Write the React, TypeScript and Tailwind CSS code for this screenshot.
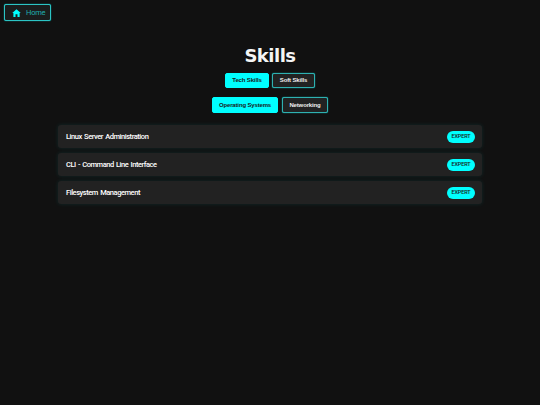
const skills = ["Linux Server Administration", "CLI - Command Line Interface", "Filesystem Management"];

function Tab({ label, active, className }: { label: string; active?: boolean; className: string }) {
  return (
    <button
      className={`h-full rounded-[2px] border text-[6px] font-bold tracking-[-0.15px] font-['Liberation_Sans',sans-serif] ${className} ${
        active
          ? "border-[#00ffff] bg-[#00ffff] text-[#1a1a1a]"
          : "border-[#2fb0b0] bg-[#222222] text-[#eeeeee] shadow-[0_0_1px_#00ffff]"
      }`}
    >
      {label}
    </button>
  );
}

export default function App() {
  return (
    <div className="min-h-[405px] bg-[#111111] pt-[4px] font-['Roboto',sans-serif] antialiased">
      <div className="pl-[4px]">
        <button className="flex h-[17px] w-[47px] items-center gap-[5px] rounded-[2px] border border-[#2cc4c4] bg-[#1a1d1d] pl-[7px] text-[7.5px] leading-[10px] tracking-[-0.2px] text-[#20b0b0] shadow-[0_0_1px_#00ffff]">
          <svg width="9" height="8" viewBox="0 0 10 9" className="block shrink-0">
            <path fill="#00ffff" d="M5 0.3 0.2 4.6h1.3V9h2.4V6h2.2v3h2.4V4.6h1.3z" />
          </svg>
          <span className="block">Home</span>
        </button>
      </div>

      <h1 className="mt-[23px] text-center font-['DejaVu_Sans',sans-serif] text-[18px] font-bold leading-[24px] tracking-[-0.5px] text-[#f5f5f5]">
        Skills
      </h1>

      <div className="mt-[5px] flex h-[15px] justify-center gap-[3px]">
        <Tab label="Tech Skills" active className="w-[44px]" />
        <Tab label="Soft Skills" className="w-[43px]" />
      </div>

      <div className="mt-[9px] flex h-[16px] justify-center gap-[4px]">
        <Tab label="Operating Systems" active className="w-[66px]" />
        <Tab label="Networking" className="w-[46px]" />
      </div>

      <div className="mx-[58px] mt-[12px] flex flex-col gap-[5px]">
        {skills.map((s) => (
          <div
            key={s}
            className="flex h-[23px] items-center justify-between rounded-[3px] bg-[#222222] pl-[8px] pr-[7px] shadow-[0_0_4px_rgba(0,255,255,0.1)]"
          >
            <span className="text-[7.5px] font-medium tracking-[-0.45px] text-white [word-spacing:0.8px]">{s}</span>
            <span className="flex h-[12px] w-[28px] items-center justify-center rounded-full bg-[#00ffff] text-[5.5px] font-medium tracking-[-0.1px] text-[#1a1a1a]">
              EXPERT
            </span>
          </div>
        ))}
      </div>
    </div>
  );
}
